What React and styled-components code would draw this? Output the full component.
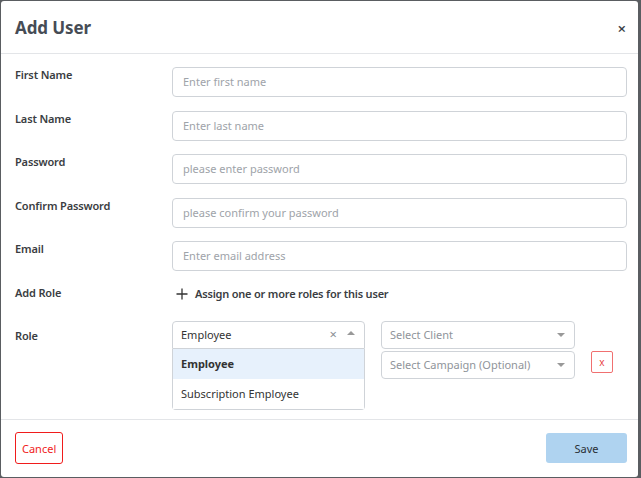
import styled, { createGlobalStyle } from "styled-components";

const GlobalStyle = createGlobalStyle`
  html, body {
    margin: 0;
    padding: 0;
    background: #5a5d61;
  }
  body {
    font-family: "Noto Sans", "Open Sans", sans-serif;
  }
`;

const fields = [
  { label: "First Name", placeholder: "Enter first name", type: "text" },
  { label: "Last Name", placeholder: "Enter last name", type: "text" },
  { label: "Password", placeholder: "please enter password", type: "password" },
  { label: "Confirm Password", placeholder: "please confirm your password", type: "password" },
  { label: "Email", placeholder: "Enter email address", type: "email" },
];

export default function App() {
  return (
    <>
      <GlobalStyle />
      <Page>
        <Modal>
          <Header>
            <Title>Add User</Title>
            <CloseButton>×</CloseButton>
          </Header>
          <Body>
            {fields.map(f => (
              <Row key={f.label}>
                <Label>{f.label}</Label>
                <Input type={f.type} placeholder={f.placeholder} />
              </Row>
            ))}
            <Row $compact>
              <Label>Add Role</Label>
              <AssignLink>
                <PlusIcon viewBox="0 0 12 12">
                  <path d="M6 0.5v11M0.5 6h11" stroke="#333" strokeWidth="1.3" />
                </PlusIcon>
                Assign one or more roles for this user
              </AssignLink>
            </Row>
            <Row $role>
              <Label $offset={7}>Role</Label>
              <RoleLine>
                <RoleSelectWrap>
                  <Select $open>
                    <SelectValue>Employee</SelectValue>
                    <ClearMark>×</ClearMark>
                    <Caret $up />
                  </Select>
                  <Menu>
                    <MenuItem $active>Employee</MenuItem>
                    <MenuItem>Subscription Employee</MenuItem>
                  </Menu>
                </RoleSelectWrap>
                <SelectStack>
                  <Select>
                    <SelectValue $placeholder>Select Client</SelectValue>
                    <Caret />
                  </Select>
                  <Select>
                    <SelectValue $placeholder>Select Campaign (Optional)</SelectValue>
                    <Caret />
                  </Select>
                </SelectStack>
                <RemoveButton>x</RemoveButton>
              </RoleLine>
            </Row>
          </Body>
          <Footer>
            <CancelButton>Cancel</CancelButton>
            <SaveButton>Save</SaveButton>
          </Footer>
        </Modal>
      </Page>
    </>
  );
}

const Page = styled.div`
  width: 641px;
  height: 478px;
  padding: 1px 0 0 1px;
  box-sizing: border-box;
`;

const Modal = styled.div`
  width: 637px;
  height: 476px;
  background: #ffffff;
  border-radius: 3px;
  display: flex;
  flex-direction: column;
  overflow: hidden;
`;

const Header = styled.div`
  height: 52px;
  border-bottom: 1px solid #e3e5e8;
  display: flex;
  align-items: center;
  justify-content: space-between;
  padding: 0 12px 0 14px;
`;

const Title = styled.h2`
  margin: 0;
  font-size: 17px;
  font-weight: 700;
  color: #464c55;
  letter-spacing: -0.1px;
`;

const CloseButton = styled.span`
  font-size: 15px;
  font-weight: 600;
  color: #3a3f46;
  line-height: 1;
  margin-top: 2px;
`;

const Body = styled.div`
  flex: 1;
  padding: 13px 11px 0 14px;
  border-bottom: 1px solid #e3e5e8;
`;

const Row = styled.div`
  display: grid;
  grid-template-columns: 157px 1fr;
  align-items: start;
  margin-bottom: ${p => (p.$compact ? "19px" : "13.5px")};
`;

const Label = styled.label`
  font-size: 11px;
  font-weight: 600;
  letter-spacing: -0.15px;
  color: #3a3d42;
  line-height: 16px;
  padding-top: ${p => p.$offset || 0}px;
`;

const Input = styled.input`
  height: 30px;
  box-sizing: border-box;
  border: 1px solid #cfd3d8;
  border-radius: 4px;
  padding: 0 10px 1px;
  font-family: inherit;
  font-size: 11px;
  color: #333;
  outline: none;
  &::placeholder {
    color: #9ea3a9;
  }
`;

const AssignLink = styled.div`
  display: flex;
  align-items: center;
  gap: 7px;
  padding-left: 4px;
  margin-top: 1px;
  font-size: 11px;
  font-weight: 600;
  letter-spacing: -0.2px;
  color: #3a3d42;
  line-height: 16px;
`;

const PlusIcon = styled.svg`
  width: 12px;
  height: 12px;
`;

const RoleLine = styled.div`
  display: flex;
  align-items: flex-start;
`;

const RoleSelectWrap = styled.div`
  position: relative;
  width: 193px;
  margin-right: 16px;
`;

const SelectStack = styled.div`
  display: flex;
  flex-direction: column;
  gap: 2px;
  width: 194px;
  margin-right: 16px;
`;

const Select = styled.div`
  height: 28px;
  box-sizing: border-box;
  border: 1px solid #cfd3d8;
  border-radius: ${p => (p.$open ? "4px 4px 0 0" : "4px")};
  display: flex;
  align-items: center;
  padding: 0 9px 1px 8px;
  font-size: 11px;
`;

const SelectValue = styled.span`
  flex: 1;
  color: ${p => (p.$placeholder ? "#8f949a" : "#333")};
  white-space: nowrap;
`;

const ClearMark = styled.span`
  color: #8a8f95;
  font-size: 13px;
  margin-right: 10px;
  line-height: 1;
`;

const Caret = styled.span`
  width: 0;
  height: 0;
  border-left: 4px solid transparent;
  border-right: 4px solid transparent;
  ${p =>
    p.$up
      ? "border-bottom: 4px solid #999; margin-bottom: 2px;"
      : "border-top: 4px solid #999; margin-top: 1px;"}
`;

const Menu = styled.div`
  position: absolute;
  top: 28px;
  left: 0;
  right: 0;
  background: #fff;
  border: 1px solid #cfd3d8;
  border-top: none;
  border-radius: 0 0 4px 4px;
`;

const MenuItem = styled.div`
  height: 30px;
  display: flex;
  align-items: center;
  padding: 0 0 1px 8px;
  box-sizing: border-box;
  font-size: 11px;
  color: #333;
  font-weight: ${p => (p.$active ? 700 : 400)};
  background: ${p => (p.$active ? "#e7f1fc" : "#fff")};
`;

const RemoveButton = styled.button`
  margin-top: 30px;
  width: 22px;
  height: 22px;
  padding: 0;
  box-sizing: border-box;
  border: 1px solid #f07070;
  border-radius: 2px;
  background: #fff;
  color: #e84545;
  font-family: inherit;
  font-size: 10px;
  line-height: 1;
`;

const Footer = styled.div`
  height: 57px;
  display: flex;
  align-items: center;
  justify-content: space-between;
  padding: 0 11px 1px 14px;
  box-sizing: border-box;
`;

const CancelButton = styled.button`
  height: 32px;
  padding: 0 6px;
  border: 1px solid #f01c1c;
  border-radius: 3px;
  background: #fff;
  color: #f01c1c;
  font-family: inherit;
  font-size: 11px;
`;

const SaveButton = styled.button`
  width: 81px;
  height: 30px;
  border: none;
  border-radius: 3px;
  background: #afd3f0;
  color: #2a2f35;
  font-family: inherit;
  font-size: 11px;
`;
